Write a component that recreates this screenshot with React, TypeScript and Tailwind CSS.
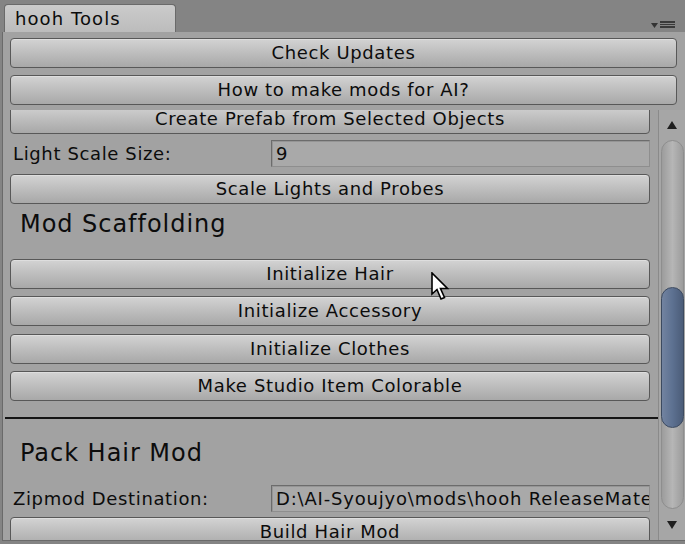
import React from "react";

const pathValue = "D:\\AI-Syoujyo\\mods\\hooh ReleaseMaterials\\HairMod";

function Btn({ label, className = "" }: { label: string; className?: string }) {
  return (
    <div
      className={`h-[30px] shrink-0 rounded-[4px] border border-[#585858] bg-gradient-to-b from-[#d3d3d3] to-[#a8a8a8] shadow-[inset_0_1px_0_#dedede] flex items-center justify-center text-[18px] leading-none tracking-[0.035em] text-[#0c0c0c] whitespace-nowrap ${className}`}
    >
      {label}
    </div>
  );
}

function FieldRow({ label, value }: { label: string; value: string }) {
  return (
    <div className="flex items-center h-[27px] shrink-0">
      <div className="w-[261px] pl-[3px] text-[18px] tracking-[0.035em] text-[#0c0c0c] whitespace-nowrap">
        {label}
      </div>
      <div className="flex-1 h-[27px] border border-t-[#6c6c6c] border-l-[#6c6c6c] border-b-[#8e8e8e] border-r-[#8e8e8e] bg-[#a9a9a9] shadow-[inset_1px_1px_0_#959595] flex items-center pl-[4px] overflow-hidden text-[18px] tracking-[0.045em] text-[#0c0c0c] whitespace-nowrap">
        {value}
      </div>
    </div>
  );
}

function Heading({ text, className = "" }: { text: string; className?: string }) {
  return (
    <div
      className={`h-[28px] shrink-0 pl-[10px] text-[24px] leading-[28px] tracking-[0.04em] text-[#0c0c0c] ${className}`}
    >
      {text}
    </div>
  );
}

function Scrollbar() {
  return (
    <div className="w-[27px] shrink-0 flex flex-col items-center bg-[#a6a6a6] border-l border-[#8a8a8a]">
      {/* up arrow */}
      <div className="h-[30px] w-full flex items-center justify-center">
        <svg width="10" height="8" viewBox="0 0 10 8">
          <path d="M5 0 L10 8 L0 8 Z" fill="#1e1e1e" />
        </svg>
      </div>
      {/* groove */}
      <div className="w-[23px] flex-1 mb-[1px] rounded-full border border-[#8e8e8e] bg-gradient-to-r from-[#9c9c9c] via-[#b6b6b6] to-[#9c9c9c] flex flex-col">
        <div className="h-[146px] shrink-0" />
        <div className="h-[141px] shrink-0 -mx-[1px] rounded-full border border-[#3c4a60] bg-gradient-to-r from-[#7283a0] via-[#5d7191] to-[#4b5c78]" />
        <div className="flex-1" />
      </div>
      {/* down arrow */}
      <div className="h-[30px] w-full flex items-center justify-center">
        <svg width="10" height="8" viewBox="0 0 10 8">
          <path d="M0 0 L10 0 L5 8 Z" fill="#1e1e1e" />
        </svg>
      </div>
    </div>
  );
}

export default function App() {
  return (
    <div className="relative w-[685px] h-[544px] overflow-hidden bg-[#848484] flex flex-col font-['DejaVu_Sans',sans-serif]">
      {/* Tab bar */}
      <div className="h-[32px] shrink-0 relative flex items-end pl-[4px]">
        <div className="w-[172px] h-[28px] rounded-t-[4px] border border-b-0 border-[#6a6a6a] bg-gradient-to-b from-[#cbcbcb] to-[#bcbcbc] pl-[10px] flex items-center text-[18px] tracking-[0.06em] text-[#0c0c0c]">
          hooh Tools
        </div>
        <div className="absolute right-[10px] top-[21px] flex items-start gap-[2px]">
          <svg width="7" height="5" viewBox="0 0 7 5" className="mt-[2px]">
            <path d="M0 0 L7 0 L3.5 5 Z" fill="#333" />
          </svg>
          <div className="flex flex-col gap-[1px]">
            <div className="w-[15px] h-[1.5px] bg-[#3a3a3a]" />
            <div className="w-[15px] h-[1.5px] bg-[#3a3a3a]" />
            <div className="w-[15px] h-[1.5px] bg-[#3a3a3a]" />
          </div>
        </div>
      </div>

      {/* Window body */}
      <div className="flex-1 ml-[2px] mb-[3px] flex flex-col bg-[#a2a2a2] border-l border-b border-[#6a6a6a] min-h-0">
        {/* Fixed top buttons */}
        <div className="pt-[6px] pl-[7px] pr-[8px] flex flex-col gap-[7px] shrink-0">
          <Btn label="Check Updates" />
          <Btn label="How to make mods for AI?" />
        </div>

        {/* Scroll view */}
        <div className="flex-1 mt-[5px] flex min-h-0">
          <div className="flex-1 overflow-hidden">
            <div className="-mt-[6px] flex flex-col pl-[7px] pr-[8px]">
              <Btn label="Create Prefab from Selected Objects" />
              <div className="mt-[6px]">
                <FieldRow label="Light Scale Size:" value="9" />
              </div>
              <Btn label="Scale Lights and Probes" className="mt-[7px]" />
              <Heading text="Mod Scaffolding" className="mt-[6px] mb-[21px]" />
              <Btn label="Initialize Hair" />
              <Btn label="Initialize Accessory" className="mt-[7px]" />
              <Btn label="Initialize Clothes" className="mt-[8px]" />
              <Btn label="Make Studio Item Colorable" className="mt-[7px]" />
              <div className="h-[2px] -ml-[5px] -mr-[8px] mt-[16px] bg-[#151515]" />
              <Heading text="Pack Hair Mod" className="mt-[20px]" />
              <div className="mt-[18px]">
                <FieldRow label="Zipmod Destination:" value={pathValue} />
              </div>
              <Btn label="Build Hair Mod" className="mt-[5px]" />
            </div>
          </div>
          <Scrollbar />
        </div>
      </div>

      {/* Mouse cursor */}
      <svg
        className="absolute left-[431px] top-[272px]"
        width="20"
        height="29"
        viewBox="0 0 20 29"
      >
        <path
          d="M1 1 L1 22 L6 17.5 L10 27 L13.5 25.5 L9.5 16.5 L16.5 16.5 Z"
          fill="#ffffff"
          stroke="#000000"
          strokeWidth="1.6"
          strokeLinejoin="miter"
        />
      </svg>
    </div>
  );
}
